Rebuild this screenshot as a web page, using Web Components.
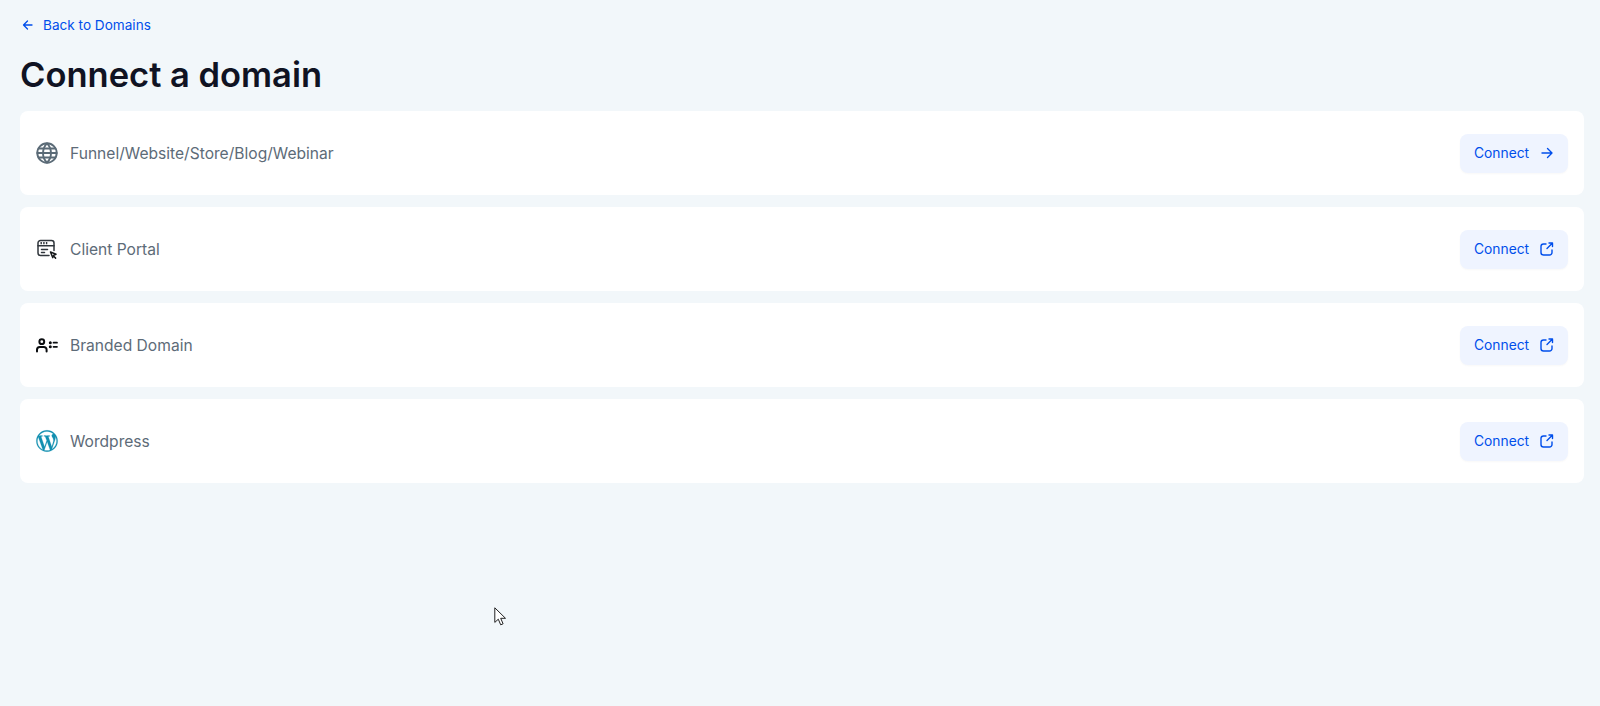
<!DOCTYPE html>
<html lang="en">
<head>
<meta charset="utf-8">
<title>Connect a domain</title>
<style>
  html, body { margin: 0; height: 100%; }
  body { background: #f2f7fa; font-family: Inter, "Liberation Sans", sans-serif; }
</style>
</head>
<body>
<domain-page>
  <back-link slot="back">Back to Domains</back-link>
  <span slot="title">Connect a domain</span>
  <domain-row icon="globe" action="arrow">Funnel/Website/Store/Blog/Webinar</domain-row>
  <domain-row icon="portal" action="external">Client Portal</domain-row>
  <domain-row icon="branded" action="external">Branded Domain</domain-row>
  <domain-row icon="wordpress" action="external">Wordpress</domain-row>
</domain-page>
<mouse-pointer></mouse-pointer>

<script>
const icons = {
  globe: `<svg width="24" height="24" viewBox="0 0 24 24" fill="none" stroke="#5b6b77" stroke-width="1.900" stroke-linecap="round" stroke-linejoin="round"><circle cx="12" cy="12" r="9.700"/><path d="M2.300 12h19.400M3.600 7.500h16.800M3.600 16.500h16.800"/><path d="M12 2.300c2.600 2.600 4 6 4 9.700s-1.400 7.100-4 9.700c-2.600-2.600-4-6-4-9.700s1.400-7.100 4-9.700z"/></svg>`,
  portal: `<svg width="24" height="24" viewBox="0 0 24 24" fill="none" stroke="#30363c" stroke-width="1.500" stroke-linecap="round" stroke-linejoin="round"><path d="M14 18.500H5.500a2.500 2.500 0 0 1-2.500-2.500V6a2.500 2.500 0 0 1 2.500-2.500h11A2.500 2.500 0 0 1 19 6v7.500"/><path d="M3 8.800h16"/><path d="M6.500 12.500h6M6.500 15.500h3"/><path stroke-width="2.200" stroke-dasharray="1.400 1.300" stroke-linecap="butt" d="M5.500 6.200h8"/><path fill="#fff" stroke="#16191c" stroke-width="1.500" d="M15.500 15l5.500 2.200-2.300 1-1 2.400z"/><path stroke="#16191c" stroke-width="1.500" d="M19 19.500l1.600 1.600"/></svg>`,
  branded: `<svg width="24" height="24" viewBox="0 0 24 24" fill="none" stroke="#0b0d10" stroke-width="2" stroke-linecap="round"><circle cx="6.800" cy="8.700" r="2.400"/><path d="M2 18.500v-1.700a2.800 2.800 0 0 1 2.800-2.800h4a2.800 2.800 0 0 1 2.800 2.800v1.700"/><circle cx="15.300" cy="9.700" r=".9" fill="#0b0d10" stroke-width="1.200"/><circle cx="15.300" cy="13.800" r=".9" fill="#0b0d10" stroke-width="1.200"/><path d="M18.500 9.700H22M18.500 13.800H22" stroke-width="1.700"/></svg>`,
  wordpress: `<svg width="24" height="24" viewBox="-1.500 -1.500 27 27" fill="#128fb0" stroke="#128fb0" stroke-width=".25"><path d="M21.469 6.825c.84 1.537 1.318 3.3 1.318 5.175 0 3.979-2.156 7.456-5.363 9.325l3.295-9.527c.615-1.54.82-2.771.82-3.864 0-.405-.026-.78-.07-1.11m-7.981.105c.647-.03 1.232-.105 1.232-.105.582-.075.514-.93-.067-.899 0 0-1.755.135-2.88.135-1.064 0-2.85-.15-2.85-.15-.585-.03-.661.855-.075.885 0 0 .54.061 1.125.09l1.68 4.605-2.37 7.08L5.354 6.900c.649-.03 1.234-.1 1.234-.1.585-.075.516-.93-.065-.896 0 0-1.746.138-2.874.138-.2 0-.438-.008-.69-.015C4.911 3.150 8.235 1.215 12 1.215c2.809 0 5.365 1.072 7.286 2.833-.046-.003-.091-.009-.141-.009-1.060 0-1.812.923-1.812 1.914 0 .89.513 1.643 1.060 2.531.411.72.89 1.643.89 2.977 0 .915-.354 1.994-.821 3.479l-1.075 3.585-3.900-11.610.001.014zM12 22.784c-1.059 0-2.081-.153-3.048-.437l3.237-9.406 3.315 9.087c.024.053.05.101.078.149-1.120.393-2.325.609-3.582.609M1.211 12c0-1.564.336-3.050.935-4.390L7.290 21.709C3.694 19.960 1.212 16.271 1.211 12M12 0C5.385 0 0 5.385 0 12s5.385 12 12 12 12-5.385 12-12S18.615 0 12 0"/></svg>`,
  arrow: `<svg width="16" height="16" viewBox="0 0 16 16" fill="none" stroke="#004eeb" stroke-width="1.400" stroke-linecap="round" stroke-linejoin="round"><path d="M3 8h10M8.500 3.500 13 8l-4.500 4.500"/></svg>`,
  external: `<svg width="16" height="16" viewBox="0 0 16 16" fill="none" stroke="#004eeb" stroke-width="1.400" stroke-linecap="round" stroke-linejoin="round"><path d="M13.500 5.500V2h-3.500M13.500 2 8 7.500"/><path d="M7 3H4.500A2.500 2.500 0 0 0 2 5.500v6A2.500 2.500 0 0 0 4.500 14h6a2.500 2.500 0 0 0 2.500-2.500V9"/></svg>`,
  back: `<svg width="14" height="14" viewBox="0 0 14 14" fill="none" stroke="#004eeb" stroke-width="1.300" stroke-linecap="round" stroke-linejoin="round"><path d="M11 7H2.500M6.500 3 2.500 7l4 4"/></svg>`,
};

class DomainPage extends HTMLElement {
  constructor() {
    super();
    this.attachShadow({ mode: "open" });
    this.shadowRoot.innerHTML = `
      <style>
        :host { display: block; padding: 15px 16px 0 20px; }
        h1 {
          margin: 18px 0 0;
          font-size: 34.500px;
          line-height: 44px;
          font-weight: 600;
          color: #101323;
        }
        .rows { display: flex; flex-direction: column; gap: 12px; margin-top: 14px; }
      </style>
      <slot name="back"></slot>
      <h1><slot name="title"></slot></h1>
      <div class="rows"><slot></slot></div>`;
  }
}

class BackLink extends HTMLElement {
  constructor() {
    super();
    this.attachShadow({ mode: "open" });
    this.shadowRoot.innerHTML = `
      <style>
        :host {
          display: flex;
          align-items: center;
          gap: 8px;
          height: 20px;
          padding-left: 1px;
          font-size: 13.600px;
          color: #004eeb;
        }
        svg { display: block; }
      </style>
      ${icons.back}<slot></slot>`;
  }
}

class DomainRow extends HTMLElement {
  constructor() {
    super();
    this.attachShadow({ mode: "open" });
  }

  connectedCallback() {
    const icon = this.getAttribute("icon");
    const action = this.getAttribute("action");
    this.shadowRoot.innerHTML = `
      <style>
        :host {
          display: flex;
          align-items: center;
          height: 84px;
          padding: 0 16px 0 15px;
          box-sizing: border-box;
          background: #fff;
          border-radius: 8px;
        }
        .label {
          flex: 1;
          margin-left: 11px;
          font-size: 15.600px;
          color: #5d6b78;
        }
        svg { display: block; flex: none; }
        .connect {
          display: flex;
          align-items: center;
          justify-content: space-between;
          width: 108px;
          height: 39px;
          padding: 0 13px 0 14px;
          box-sizing: border-box;
          border-radius: 8px;
          background: #eff4ff;
          box-shadow: 0 1px 2px rgba(16, 24, 40, .03);
          color: #004eeb;
          font-size: 13.800px;
        }
      </style>
      ${icons[icon]}
      <span class="label"><slot></slot></span>
      <span class="connect">Connect ${icons[action]}</span>`;
  }
}

class MousePointer extends HTMLElement {
  constructor() {
    super();
    this.attachShadow({ mode: "open" });
    this.shadowRoot.innerHTML = `
      <style>
        :host { position: absolute; left: 494px; top: 607px; width: 14px; height: 20px; }
        svg { display: block; }
      </style>
      <svg width="14" height="20" viewBox="0 0 14 20"><path d="M.8.800v14.600l3.500-3.200 2.400 5.600 2.400-1-2.400-5.500h4.800z" fill="#fff" stroke="#222" stroke-width="1"/></svg>`;
  }
}

customElements.define("domain-page", DomainPage);
customElements.define("back-link", BackLink);
customElements.define("domain-row", DomainRow);
customElements.define("mouse-pointer", MousePointer);
</script>
</body>
</html>
